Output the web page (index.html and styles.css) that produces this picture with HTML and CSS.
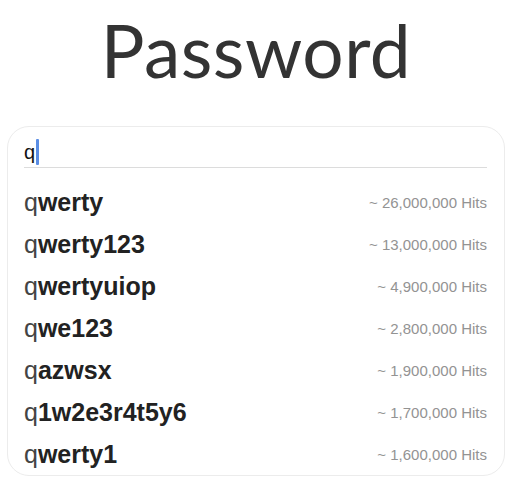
FILE: index.html
```html
<!DOCTYPE html>
<html lang="en">
<head>
    <meta charset="UTF-8">
    <meta name="viewport" content="width=device-width, initial-scale=1.0">
    <title>Password</title>
    <link rel="stylesheet" href="styles.css">
</head>
<body>
    <h1 class="title">Password</h1>
    <div class="card">
        <div class="search">
            <span class="typed">q</span><span class="caret"></span>
        </div>
        <ul class="results">
            <li><span class="word">q<b>werty</b></span><span class="hits">~ 26,000,000 Hits</span></li>
            <li><span class="word">q<b>werty123</b></span><span class="hits">~ 13,000,000 Hits</span></li>
            <li><span class="word">q<b>wertyuiop</b></span><span class="hits">~ 4,900,000 Hits</span></li>
            <li><span class="word">q<b>we123</b></span><span class="hits">~ 2,800,000 Hits</span></li>
            <li><span class="word">q<b>azwsx</b></span><span class="hits">~ 1,900,000 Hits</span></li>
            <li><span class="word">q<b>1w2e3r4t5y6</b></span><span class="hits">~ 1,700,000 Hits</span></li>
            <li><span class="word">q<b>werty1</b></span><span class="hits">~ 1,600,000 Hits</span></li>
        </ul>
    </div>
</body>
</html>
```

FILE: styles.css
```css
* {
    margin: 0;
    padding: 0;
    box-sizing: border-box;
    font-family: "Liberation Sans", Arial, sans-serif;
}

body {
    background: #fff;
    width: 512px;
}

.title {
    height: 126px;
    padding-top: 5px;
    font-family: Lato, sans-serif;
    font-weight: 400;
    font-size: 73px;
    line-height: 90px;
    letter-spacing: 0.5px;
    color: #333;
    text-align: center;
}

.card {
    margin: 0 7px;
    border: 1px solid #ececec;
    border-radius: 22px;
    padding: 10px 17px 0 16px;
}

.search {
    display: flex;
    align-items: center;
    height: 31px;
    border-bottom: 1px solid #dcdcdc;
    font-size: 20px;
    color: #111;
}

.caret {
    width: 3px;
    height: 26px;
    margin-left: 1px;
    background: #5a8de4;
    border-radius: 1px;
}

.results {
    list-style: none;
    padding-top: 13px;
}

.results li {
    display: flex;
    justify-content: space-between;
    align-items: center;
    height: 42px;
}

.word {
    font-size: 25px;
    color: #444;
}

.word b {
    color: #222;
}

.hits {
    font-size: 15px;
    color: #939393;
}
```
